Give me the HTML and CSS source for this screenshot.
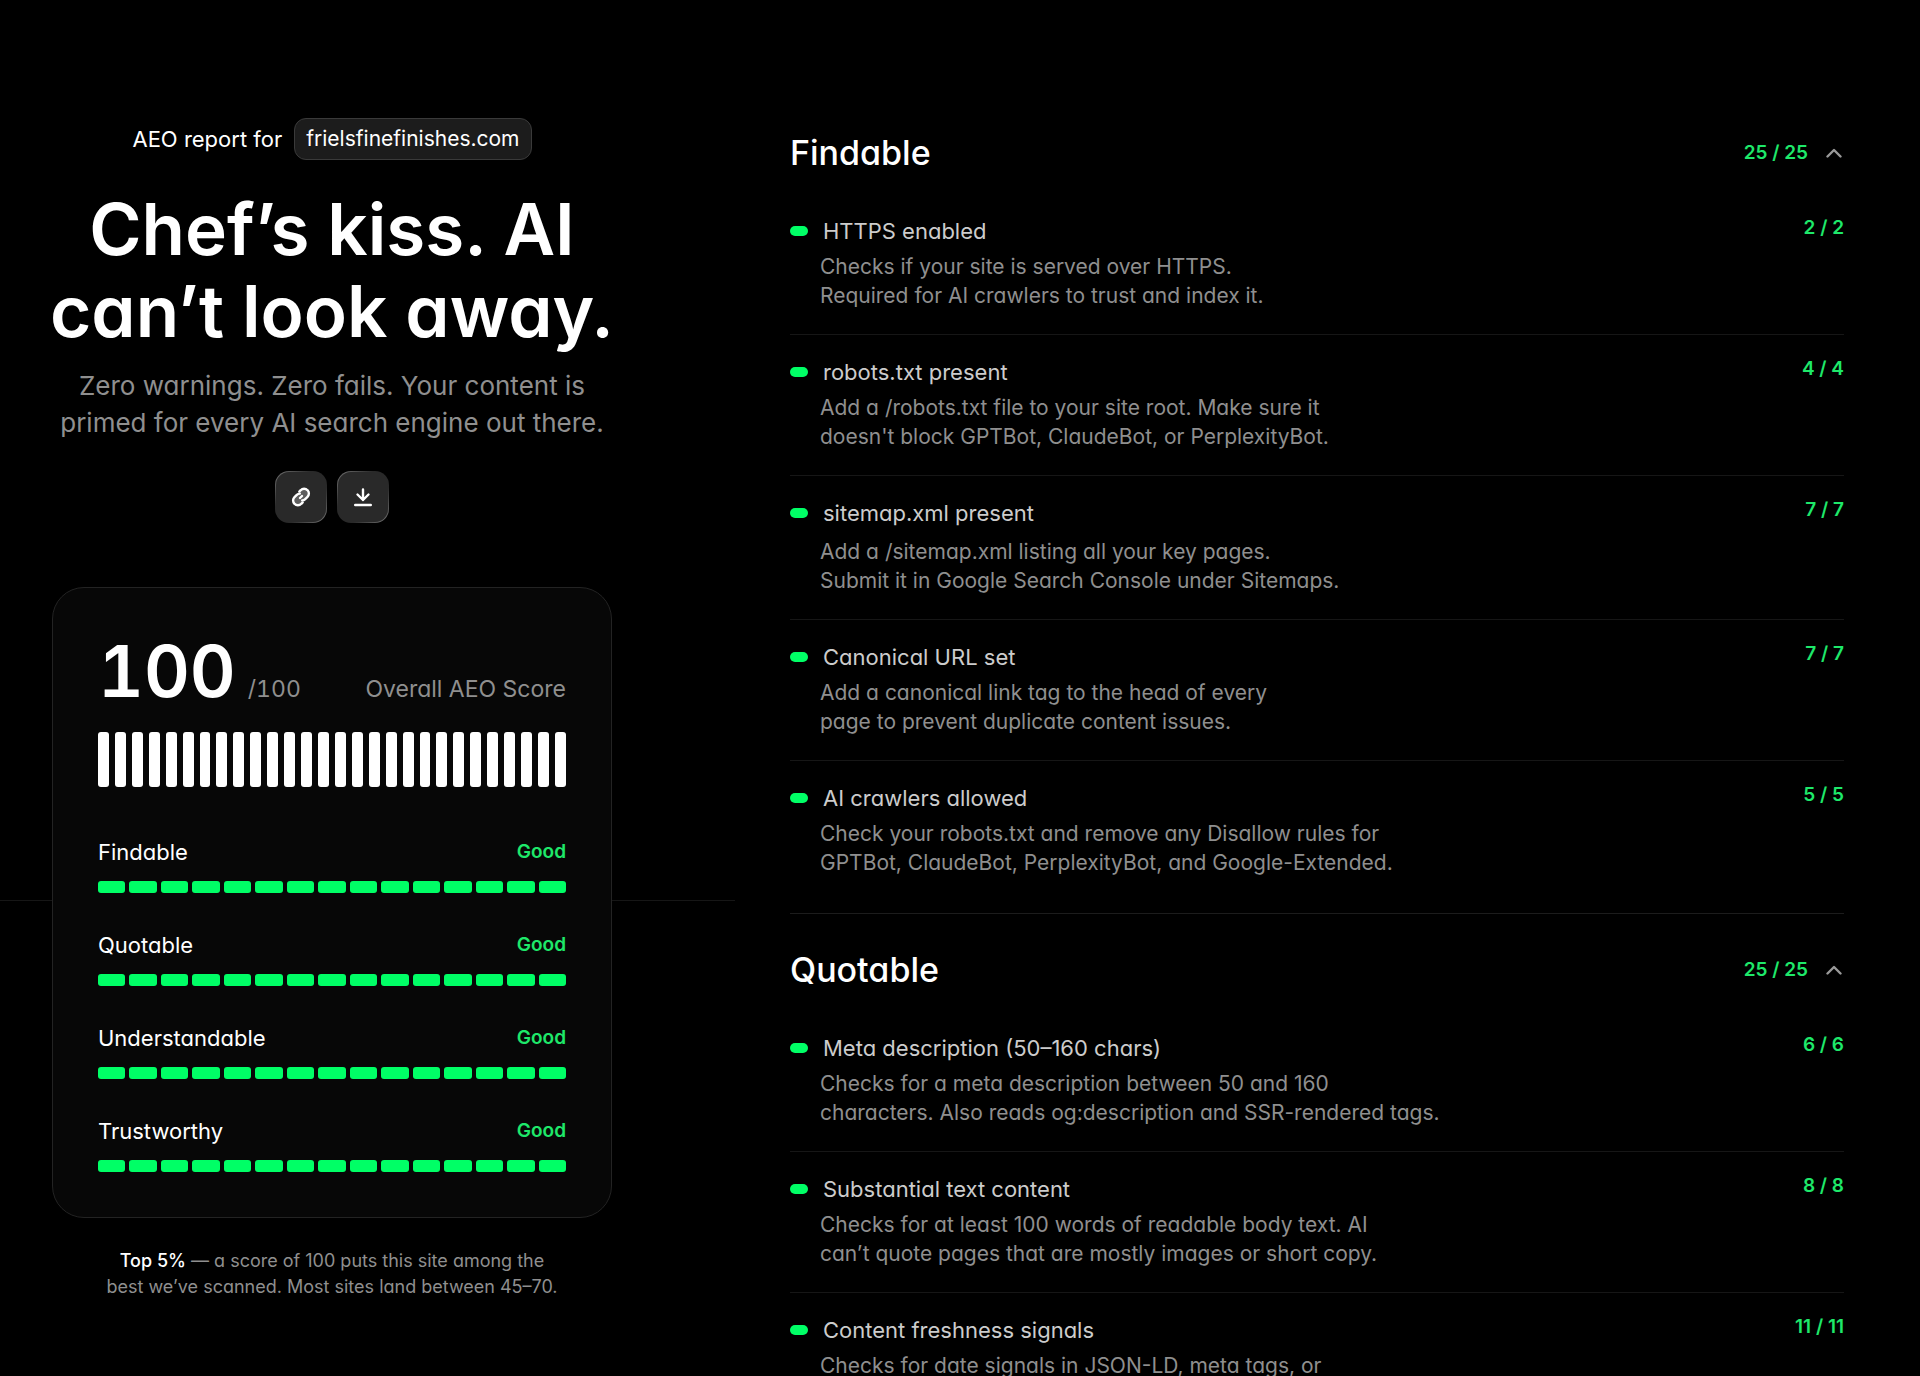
FILE: index.html
```html
<!DOCTYPE html>
<html lang="en">
<head>
    <meta charset="UTF-8">
    <meta name="viewport" content="width=device-width, initial-scale=1.0">
    <title>AEO report for frielsfinefinishes.com</title>
    <link rel="stylesheet" href="styles.css">
</head>
<body>
    <div class="page">
        <aside class="summary">
            <div class="summary-inner">
                <p class="report-for">AEO report for <span class="domain">frielsfinefinishes.com</span></p>
                <h1>Chef’s kiss. AI<br>can’t look away.</h1>
                <p class="lead">Zero warnings. Zero fails. Your content is<br>primed for every AI search engine out there.</p>

                <div class="actions">
                    <button type="button" class="icon-btn" aria-label="Copy link">
                        <svg width="20" height="20" viewBox="0 0 20 20" fill="#fff" fill-opacity="0.25" stroke="#fff" stroke-width="2.4" stroke-linecap="round" stroke-linejoin="round">
                            <path d="M8.300 4.600l1.400-1.400a4.600 4.600 0 0 1 6.800 0 4.600 4.600 0 0 1 0 6.600l-2.300 2.300a4.600 4.600 0 0 1-3 1.300"/>
                            <path d="M11.700 15.400l-1.400 1.400a4.600 4.600 0 0 1-6.800 0 4.600 4.600 0 0 1 0-6.600l2.300-2.300a4.600 4.600 0 0 1 3-1.300"/>
                            <path d="M9 11l2-2"/>
                        </svg>
                    </button>
                    <button type="button" class="icon-btn" aria-label="Download report">
                        <svg width="20" height="20" viewBox="0 0 20 20" fill="none" stroke="#fff" stroke-width="2.4" stroke-linecap="round" stroke-linejoin="round">
                            <path d="M10 2.500v10.500M4.500 7.500l5.500 5.500 5.500-5.500M2.200 18h15.600"/>
                        </svg>
                    </button>
                </div>

                <section class="score-card">
                    <div class="score-head">
                        <div class="score-total"><span class="score">100</span><span class="score-max">/100</span></div>
                        <span class="score-label">Overall AEO Score</span>
                    </div>
                    <div class="bars" data-count="28"></div>

                    <div class="category">
                        <div class="category-head"><span>Findable</span><span class="good">Good</span></div>
                        <div class="segments" data-count="15"></div>
                    </div>
                    <div class="category">
                        <div class="category-head"><span>Quotable</span><span class="good">Good</span></div>
                        <div class="segments" data-count="15"></div>
                    </div>
                    <div class="category">
                        <div class="category-head"><span>Understandable</span><span class="good">Good</span></div>
                        <div class="segments" data-count="15"></div>
                    </div>
                    <div class="category">
                        <div class="category-head"><span>Trustworthy</span><span class="good">Good</span></div>
                        <div class="segments" data-count="15"></div>
                    </div>
                </section>

                <p class="footnote"><strong>Top 5%</strong> — a score of 100 puts this site among the<br>best we’ve scanned. Most sites land between 45–70.</p>
            </div>
        </aside>

        <main class="results">
            <section class="group">
                <h2>
                    <button type="button" class="group-toggle" aria-expanded="true">
                        <span class="group-name">Findable</span>
                        <span class="points">25 / 25</span>
                        <svg width="18" height="18" viewBox="0 0 18 18" fill="none" stroke="#999" stroke-width="2.4" stroke-linecap="round" stroke-linejoin="round"><path d="M1.500 12.500l6.500-6.500 6.500 6.500"/></svg>
                    </button>
                </h2>
                <ul class="checks">
                    <li class="check">
                        <div>
                            <h3>HTTPS enabled</h3>
                            <p>Checks if your site is served over HTTPS.<br>Required for AI crawlers to trust and index it.</p>
                        </div>
                        <span class="points">2 / 2</span>
                    </li>
                    <li class="check">
                        <div>
                            <h3>robots.txt present</h3>
                            <p>Add a /robots.txt file to your site root. Make sure it<br>doesn't block GPTBot, ClaudeBot, or PerplexityBot.</p>
                        </div>
                        <span class="points">4 / 4</span>
                    </li>
                    <li class="check check-spaced">
                        <div>
                            <h3>sitemap.xml present</h3>
                            <p>Add a /sitemap.xml listing all your key pages.<br>Submit it in Google Search Console under Sitemaps.</p>
                        </div>
                        <span class="points">7 / 7</span>
                    </li>
                    <li class="check">
                        <div>
                            <h3>Canonical URL set</h3>
                            <p>Add a canonical link tag to the head of every<br>page to prevent duplicate content issues.</p>
                        </div>
                        <span class="points">7 / 7</span>
                    </li>
                    <li class="check">
                        <div>
                            <h3>AI crawlers allowed</h3>
                            <p>Check your robots.txt and remove any Disallow rules for<br>GPTBot, ClaudeBot, PerplexityBot, and Google-Extended.</p>
                        </div>
                        <span class="points">5 / 5</span>
                    </li>
                </ul>
            </section>

            <section class="group">
                <h2>
                    <button type="button" class="group-toggle" aria-expanded="true">
                        <span class="group-name">Quotable</span>
                        <span class="points">25 / 25</span>
                        <svg width="18" height="18" viewBox="0 0 18 18" fill="none" stroke="#999" stroke-width="2.4" stroke-linecap="round" stroke-linejoin="round"><path d="M1.500 12.500l6.500-6.500 6.500 6.500"/></svg>
                    </button>
                </h2>
                <ul class="checks">
                    <li class="check">
                        <div>
                            <h3>Meta description (50–160 chars)</h3>
                            <p>Checks for a meta description between 50 and 160<br>characters. Also reads og:description and SSR-rendered tags.</p>
                        </div>
                        <span class="points">6 / 6</span>
                    </li>
                    <li class="check">
                        <div>
                            <h3>Substantial text content</h3>
                            <p>Checks for at least 100 words of readable body text. AI<br>can’t quote pages that are mostly images or short copy.</p>
                        </div>
                        <span class="points">8 / 8</span>
                    </li>
                    <li class="check">
                        <div>
                            <h3>Content freshness signals</h3>
                            <p>Checks for date signals in JSON-LD, meta tags, or</p>
                        </div>
                        <span class="points">11 / 11</span>
                    </li>
                </ul>
            </section>
        </main>
    </div>

    <script>
        // fill every meter with its segments
        document.querySelectorAll('[data-count]').forEach(function(meter) {
            for (let i = 0; i < Number(meter.dataset.count); i++) {
                meter.appendChild(document.createElement('span'));
            }
        });
    </script>
</body>
</html>
```

FILE: styles.css
```css
* {
    box-sizing: border-box;
}
body {
    margin: 0;
    background-color: #000;
    color: #fff;
    font-family: Inter, "Liberation Sans", sans-serif;
    font-feature-settings: "cv11";
}
h1, h2, h3, p, ul {
    margin: 0;
    padding: 0;
    font-weight: 400;
}
button {
    font: inherit;
    font-feature-settings: inherit;
    color: inherit;
    border: none;
    padding: 0;
    cursor: pointer;
}
.page {
    display: grid;
    grid-template-columns: 735px 1fr;
    height: 100vh;
    overflow: hidden;
}

/* left column */
.summary {
    padding: 118px 123px 0 52px;
    background: linear-gradient(#161616, #161616) 0 900px / 100% 1px no-repeat;
}
.summary-inner {
    display: flex;
    flex-direction: column;
    align-items: center;
    text-align: center;
}
.report-for {
    display: flex;
    align-items: center;
    gap: 12px;
    font-size: 22px;
    line-height: 28px;
}
.domain {
    padding: 6px 11px;
    background-color: #1c1c1c;
    border: 1px solid #3a3a3a;
    border-radius: 12px;
    font-size: 21px;
}
h1 {
    margin-top: 28px;
    font-size: 71px;
    font-weight: 600;
    line-height: 82px;
    white-space: nowrap;
}
.lead {
    margin-top: 15px;
    color: #8f8f8f;
    font-size: 26px;
    line-height: 37px;
    white-space: nowrap;
}
.actions {
    display: flex;
    gap: 10px;
    margin-top: 30px;
}
.icon-btn {
    display: flex;
    align-items: center;
    justify-content: center;
    width: 52px;
    height: 52px;
    border: 1px solid transparent;
    border-radius: 14px;
    background: linear-gradient(#292929, #292929) padding-box,
        linear-gradient(135deg, #777, #292929 35%, #292929 65%, #777) border-box;
}
.score-card {
    width: 100%;
    margin-top: 64px;
    padding: 45px;
    background-color: #070707;
    border: 1px solid #232323;
    border-radius: 32px;
}
.score-head, .score-total {
    display: flex;
    align-items: baseline;
    justify-content: space-between;
}
.score-total {
    gap: 12px;
    font-variant-numeric: tabular-nums;
}
.score {
    font-size: 71px;
    font-weight: 600;
    line-height: 76px;
}
.score-max, .score-label {
    color: #8f8f8f;
    font-size: 23px;
    line-height: 28px;
}
.bars, .segments {
    display: flex;
}
.bars span, .segments span {
    flex: 1;
    border-radius: 3px;
}
.bars {
    gap: 6px;
    height: 55px;
    margin: 23px 0 51px;
}
.bars span {
    background-color: #fff;
}
.segments {
    gap: 4px;
    height: 12px;
    margin-top: 15px;
}
.segments span {
    background-color: #00ff66;
}
.category + .category {
    margin-top: 38px;
}
.category-head {
    display: flex;
    align-items: center;
    justify-content: space-between;
    font-size: 22px;
    line-height: 28px;
}
.good {
    color: #1ee86a;
    font-size: 19px;
    font-weight: 600;
}
.footnote {
    margin-top: 30px;
    color: #8f8f8f;
    font-size: 18px;
    line-height: 26px;
}
.footnote strong {
    color: #fff;
    font-weight: 500;
}

/* right column */
.results {
    padding: 125px 76px 0 55px;
}
.group + .group {
    margin-top: 12px;
    padding-top: 28px;
    border-top: 1px solid #1c1c1c;
}
.group-toggle {
    display: flex;
    align-items: center;
    width: 100%;
    background: none;
    text-align: left;
}
.group-toggle svg {
    margin-left: 18px;
}
.group-name {
    flex: 1;
    font-size: 34px;
    font-weight: 500;
    line-height: 56px;
}
.points {
    color: #1ee86a;
    font-size: 19px;
    font-weight: 600;
    line-height: 28px;
    white-space: nowrap;
}
.checks {
    margin-top: 13px;
    list-style: none;
}
.check {
    display: flex;
    align-items: flex-start;
    justify-content: space-between;
    padding: 20px 0 24px;
}
.check + .check {
    border-top: 1px solid #161616;
}
.check h3 {
    display: flex;
    align-items: center;
    gap: 15px;
    color: #ccc;
    font-size: 22px;
    line-height: 34px;
}
.check h3::before {
    content: "";
    width: 18px;
    height: 10px;
    border-radius: 5px;
    background-color: #00ff66;
}
.check p {
    padding: 4px 0 0 30px;
    color: #8f8f8f;
    font-size: 21px;
    line-height: 29px;
}
.check-spaced p {
    padding-top: 7px;
}
```
